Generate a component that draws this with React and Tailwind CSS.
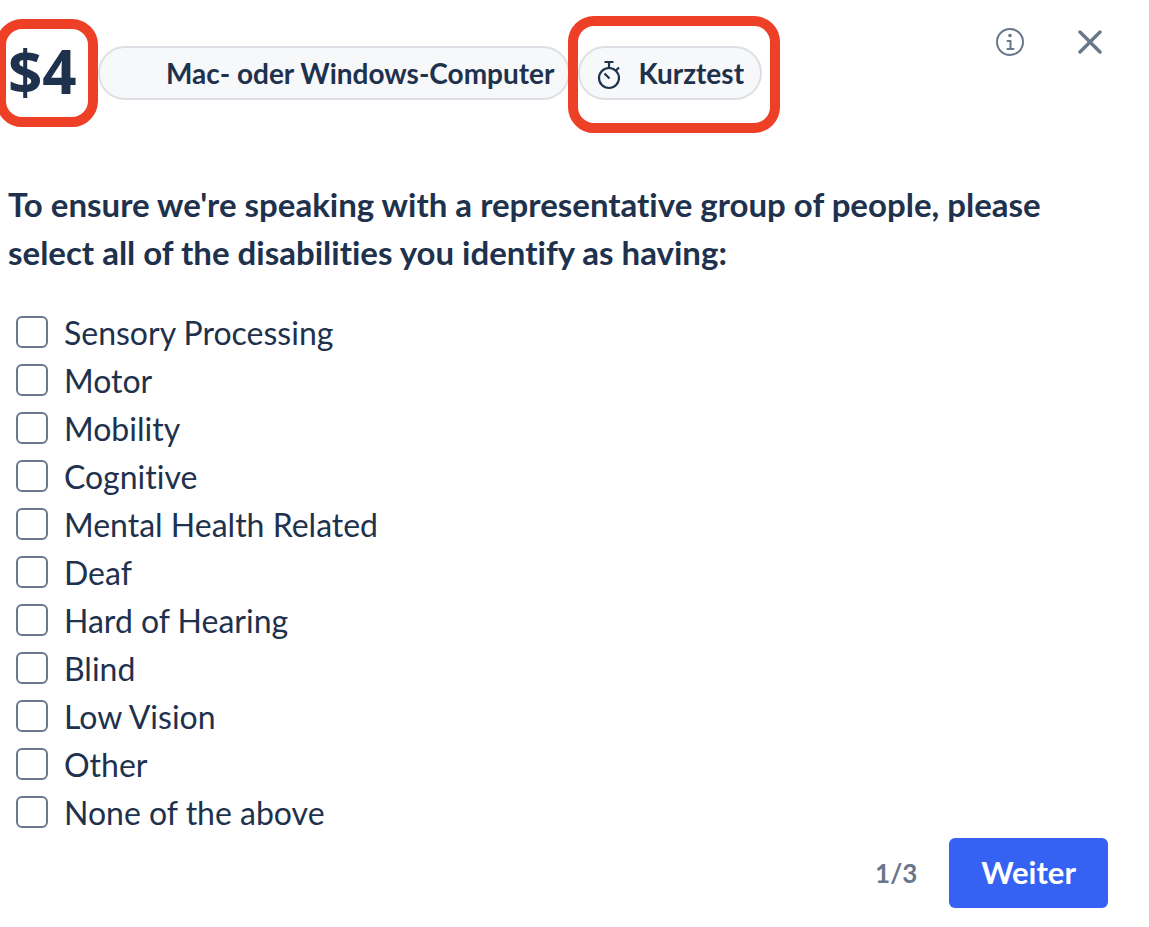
import React, { useState } from 'react';

const OPTIONS = [
  'Sensory Processing',
  'Motor',
  'Mobility',
  'Cognitive',
  'Mental Health Related',
  'Deaf',
  'Hard of Hearing',
  'Blind',
  'Low Vision',
  'Other',
  'None of the above',
];

const StopwatchIcon = () => (
  <svg width="24" height="34" viewBox="0 -4 24 34" fill="none" stroke="currentColor" strokeWidth="2.2" aria-hidden="true">
    <circle cx="13" cy="18" r="10" />
    <path d="M8.5 2h9M13 2v6M20 10.5l3-3M8.5 13.5l5 5" />
  </svg>
);

const InfoIcon = () => (
  <svg width="28" height="28" viewBox="0 0 28 28" fill="none" stroke="currentColor" strokeWidth="2" strokeLinecap="round" strokeLinejoin="round" aria-hidden="true">
    <circle cx="14" cy="14" r="13" />
    <circle cx="14" cy="7.5" r="1.8" fill="currentColor" stroke="none" />
    <path d="M11.5 13H14.5V21M11.5 21H17.5" />
  </svg>
);

const CloseIcon = () => (
  <svg width="24" height="24" viewBox="0 0 24 24" fill="none" stroke="currentColor" strokeWidth="3.4" strokeLinecap="round" aria-hidden="true">
    <path d="M2 2l20 20M22 2L2 22" />
  </svg>
);

const Header = () => (
  <header className="flex items-start justify-between pr-[47px]">
    <div className="flex items-center pt-[46px]">
      <div className="relative flex h-[54px] w-[98px] items-center pb-1 pl-2">
        <span className="font-['Open_Sans',sans-serif] text-[60px] leading-none font-bold">$4</span>
        <span className="pointer-events-none absolute -top-[27px] -left-1 z-10 h-[108px] w-[102px] rounded-[26px] border-10 border-[#ee4026]" />
      </div>
      <div className="flex h-[54px] items-center rounded-full border-2 border-[#dddfe4] bg-[#f7f8fa] pr-3.5 pl-[66px] text-[28px] font-bold whitespace-nowrap">
        Mac- oder Windows-Computer
      </div>
      <div className="relative ml-2 flex h-[54px] items-center gap-[18px] rounded-full border-2 border-[#dddfe4] bg-[#f7f8fa] px-4 text-[28px] font-bold whitespace-nowrap">
        <StopwatchIcon />
        Kurztest
        <span className="pointer-events-none absolute -top-8 -right-5 -left-3 z-10 h-[117px] rounded-[26px] border-10 border-[#ee4026]" />
      </div>
    </div>
    <div className="flex items-center gap-[54px] pt-7 text-[#69778a]">
      <button type="button" aria-label="Info"><InfoIcon /></button>
      <button type="button" aria-label="Schließen"><CloseIcon /></button>
    </div>
  </header>
);

const App = () => {
  const [selected, setSelected] = useState([]);

  const toggle = (option) =>
    setSelected((prev) =>
      prev.includes(option) ? prev.filter((o) => o !== option) : [...prev, option]
    );

  return (
    <main className="min-h-screen overflow-hidden bg-white font-['Lato','Liberation_Sans',sans-serif] text-[#1e314d] [font-variant-ligatures:none]">
      <Header />
      <form className="pt-20" onSubmit={(e) => e.preventDefault()}>
        <fieldset>
          <legend className="pr-16 pl-2 text-[33px] leading-[48px] font-bold">
            To ensure we're speaking with a representative group of people, please select all of the disabilities you identify as having:
          </legend>
          <div className="mt-8 flex flex-col items-start pl-4">
            {OPTIONS.map((option) => (
              <label key={option} className="flex h-12 items-center gap-4 text-[32px] leading-[48px]">
                <input
                  type="checkbox"
                  checked={selected.includes(option)}
                  onChange={() => toggle(option)}
                  className="size-8 shrink-0 appearance-none rounded-md border-2 border-[#69778a] bg-white checked:bg-[#3662f4]"
                />
                <span className="pt-0.5">{option}</span>
              </label>
            ))}
          </div>
        </fieldset>
        <div className="flex items-center justify-end gap-8 pt-0.5 pr-[41px]">
          <span className="text-[26px] font-bold text-[#69778a]">1/3</span>
          <button type="submit" className="h-[70px] rounded-md bg-[#3662f4] px-8 pb-0.5 text-[31px] font-bold text-white">
            Weiter
          </button>
        </div>
      </form>
    </main>
  );
};

export default App;
